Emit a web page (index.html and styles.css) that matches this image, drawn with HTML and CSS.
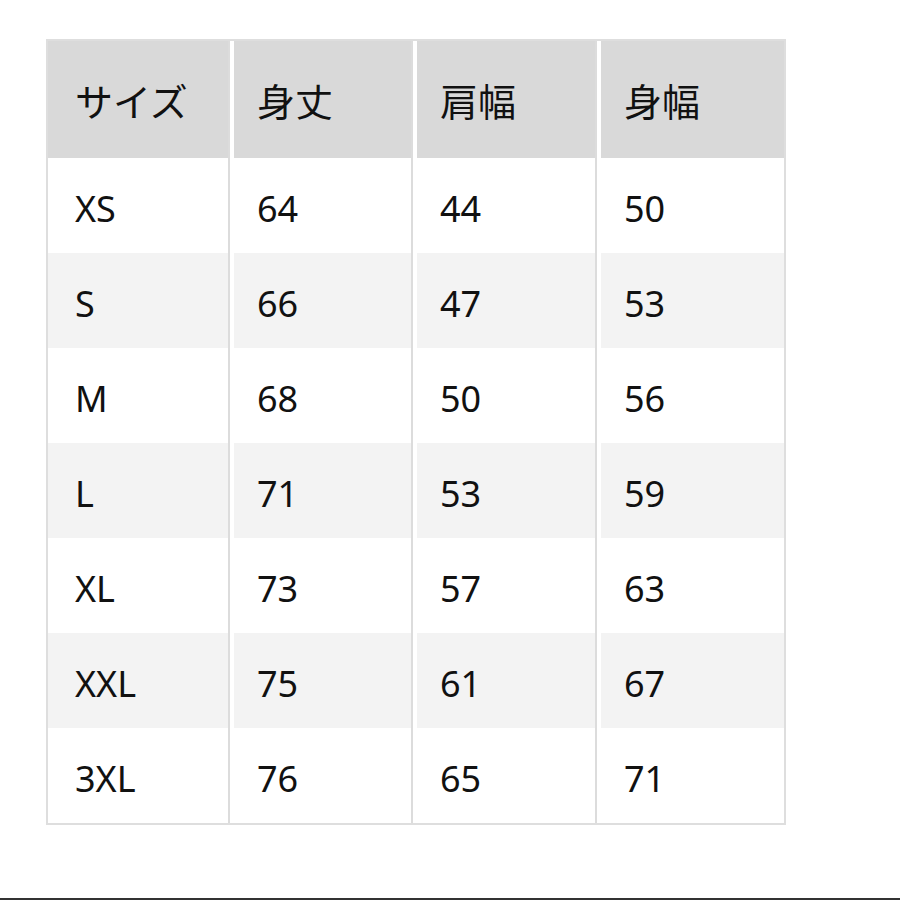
FILE: index.html
```html
<!DOCTYPE html>
<html lang="ja">
<head>
<meta charset="utf-8">
<link rel="stylesheet" href="styles.css">
</head>
<body>
<main class="page">
  <div class="size-table">
    <div class="row head">
      <div class="cell">サイズ</div>
      <div class="cell">身丈</div>
      <div class="cell">肩幅</div>
      <div class="cell">身幅</div>
    </div>
    <div class="row"><div class="cell">XS</div><div class="cell">64</div><div class="cell">44</div><div class="cell">50</div></div>
    <div class="row alt"><div class="cell">S</div><div class="cell">66</div><div class="cell">47</div><div class="cell">53</div></div>
    <div class="row"><div class="cell">M</div><div class="cell">68</div><div class="cell">50</div><div class="cell">56</div></div>
    <div class="row alt"><div class="cell">L</div><div class="cell">71</div><div class="cell">53</div><div class="cell">59</div></div>
    <div class="row"><div class="cell">XL</div><div class="cell">73</div><div class="cell">57</div><div class="cell">63</div></div>
    <div class="row alt"><div class="cell">XXL</div><div class="cell">75</div><div class="cell">61</div><div class="cell">67</div></div>
    <div class="row"><div class="cell">3XL</div><div class="cell">76</div><div class="cell">65</div><div class="cell">71</div></div>
  </div>
</main>
<div class="bottom-bar"></div>
</body>
</html>
```

FILE: styles.css
```css
html, body {
  margin: 0;
  padding: 0;
  background: #ffffff;
}
body {
  display: flex;
  flex-direction: column;
  height: 900px;
  font-family: "Noto Sans", "Noto Sans CJK JP", sans-serif;
  color: #111111;
}
.page {
  flex: 1;
  padding: 39px 0 0 46px;
}
.size-table {
  width: 736px;
  border: 2px solid #dedede;
  background: #ffffff;
}
.row {
  display: grid;
  grid-template-columns: 180px 183px 184px 189px;
  height: 95px;
}
.row.head {
  height: 117px;
}
.cell {
  display: flex;
  align-items: center;
  padding-left: 27px;
  font-size: 36px;
  padding-top: 6px;
  box-sizing: border-box;
}
.cell + .cell {
  border-left: 2px solid #dcdcdc;
  box-shadow: inset 4px 0 0 #ffffff;
  padding-left: 27px;
}
.row.head .cell {
  background: #d9d9d9;
  font-family: "Noto Sans CJK JP", sans-serif;
  font-weight: 400;
  font-size: 38px;
  padding-top: 0;
}
.row.alt .cell {
  background: #f3f3f3;
}
.bottom-bar {
  height: 2px;
  background: #333333;
}
```
